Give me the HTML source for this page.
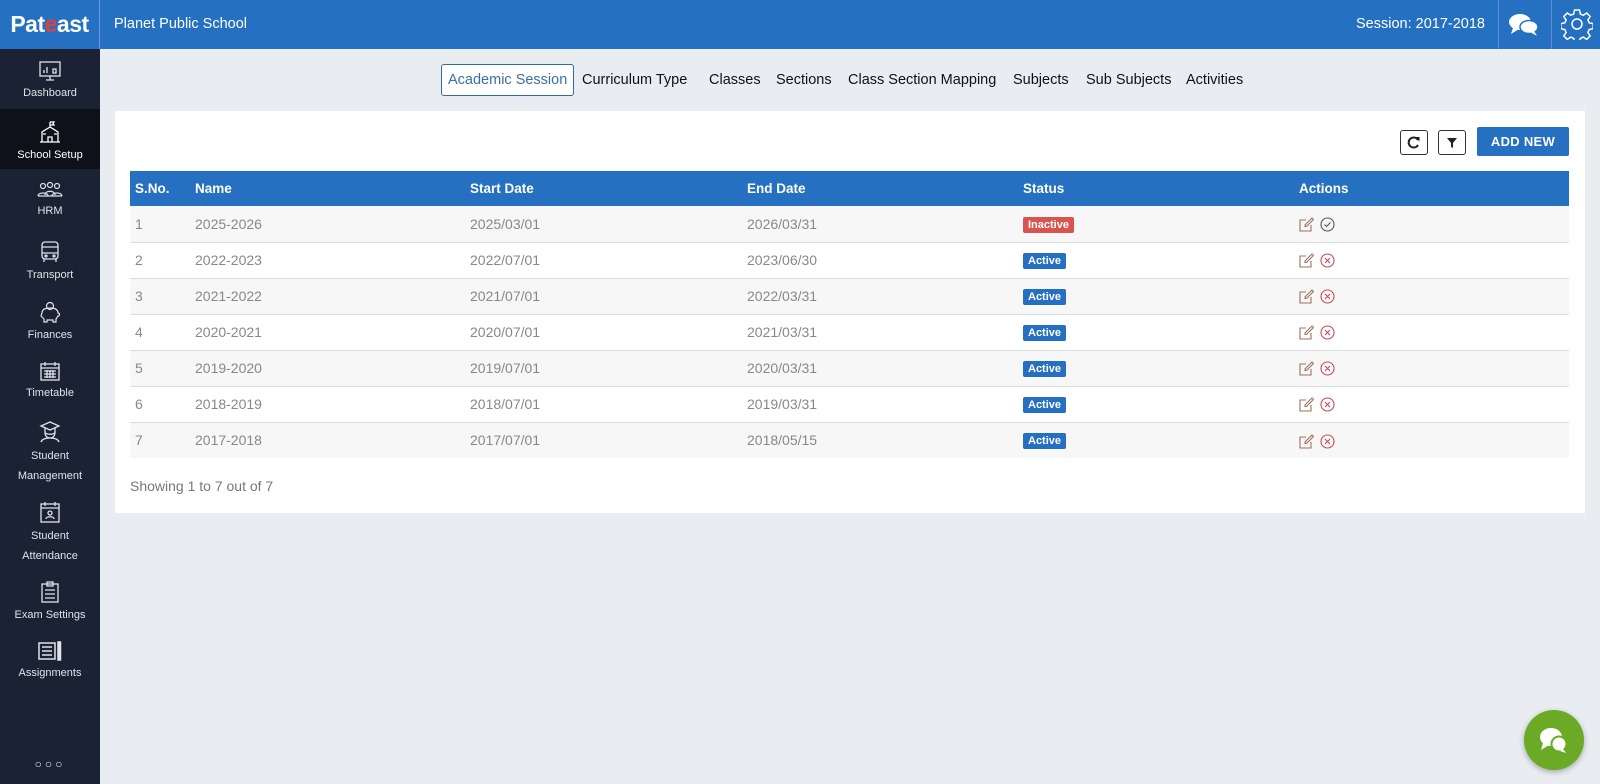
<!DOCTYPE html>
<html><head><meta charset="utf-8"><style>
*{margin:0;padding:0;box-sizing:border-box}
body{width:1600px;height:784px;overflow:hidden;background:#e9edf2;font-family:"Liberation Sans",sans-serif;position:relative}
.top{position:absolute;left:0;top:0;width:1600px;height:49px;background:#2670c2;color:#fff}
.logo{position:absolute;left:0;top:0;width:100px;height:49px;border-right:1px solid #6a9ad6;font-weight:bold;font-size:23px;line-height:49px;text-align:center;letter-spacing:-0.5px}
.logo span{color:#e0403a}
.school{position:absolute;left:114px;top:16px;font-size:14.5px}
.sess{position:absolute;right:115px;top:16px;font-size:14.5px}
.div{position:absolute;top:0;width:1px;height:49px;background:#5b8fd0}
.side{position:absolute;left:0;top:49px;width:100px;height:735px;background:#1b2233;color:#dfe3ea;font-size:11px;text-align:center}
.it{height:60px;padding-top:12px}
.it svg{display:block;margin:0 auto 6px}
.it.act{background:#0e1119;color:#fff}
.it.two{height:80px}
.it.two div{line-height:20px;margin-top:-3px}
.tabs{position:absolute;top:64px;height:32px;font-size:14.5px;color:#111}
.tab{position:absolute;top:0;line-height:32px;white-space:nowrap}
.tab.a{border:1px solid #2c6aa8;border-radius:3px;background:#fff;color:#3b6fa4;padding:0 6px;line-height:30px}
.panel{position:absolute;left:115px;top:111px;width:1470px;height:402px;background:#fff}
.btn{position:absolute;top:19px;width:28px;height:25px;border:1px solid #333;border-radius:3px;background:#fff}
.add{position:absolute;left:1362px;top:16px;width:92px;height:29px;background:#2670c2;color:#fff;font-weight:bold;font-size:13px;line-height:29px;text-align:center;border-radius:2px;letter-spacing:.3px}
table{position:absolute;left:15px;top:60px;width:1439px;border-collapse:collapse;font-size:14px}
th{background:#2670c2;color:#fff;text-align:left;height:35px;font-size:13.5px;font-weight:bold}
td{height:36px;color:#888;border-bottom:1px solid #ddd}
tr:nth-child(even) td{background:#f7f7f7}
th:first-child,td:first-child{padding-left:5px}
.b{display:inline-block;color:#fff;font-size:11px;font-weight:bold;padding:2px 5px;border-radius:2px;background:#2670c2}
.b.r{background:#d9534f}
.ic{vertical-align:middle;margin-right:6px}
.show{position:absolute;left:15px;top:367px;font-size:14px;color:#777}
.fab{position:absolute;left:1524px;top:710px;width:60px;height:60px;border-radius:50%;background:#6aaa25;box-shadow:0 2px 6px rgba(0,0,0,.3)}
</style></head><body>
<div class="top">
<div class="logo">Pat<span>e</span>ast</div>
<div class="school">Planet Public School</div>
<div class="sess">Session: 2017-2018</div>
<div class="div" style="left:1498px"></div><div class="div" style="left:1551px"></div>
<svg style="position:absolute;left:1508px;top:11px" width="32" height="28" viewBox="0 0 32 28"><ellipse cx="12" cy="11" rx="11" ry="8" fill="#fff"/><path d="M5 17 L3 23 L11 18Z" fill="#fff"/><ellipse cx="21" cy="16" rx="9" ry="6.5" fill="#fff" stroke="#2670c2" stroke-width="1.5"/><path d="M26 20 L29 25 L22 21Z" fill="#fff"/></svg>
<svg style="position:absolute;left:1561px;top:8px" width="32" height="32" viewBox="0 0 32 32" fill="none" stroke="#fff" stroke-width="1.5"><path d="M13.5 2h5l.8 4 3 1.3 3.4-2.3 3.5 3.5-2.3 3.4 1.3 3 4 .8v5l-4 .8-1.3 3 2.3 3.4-3.5 3.5-3.4-2.3-3 1.3-.8 4h-5l-.8-4-3-1.3-3.4 2.3-3.5-3.5 2.3-3.4-1.3-3-4-.8v-5l4-.8 1.3-3-2.3-3.4 3.5-3.5 3.4 2.3 3-1.3z"/><circle cx="16" cy="16" r="5"/></svg>
</div>
<div class="side">
<div class="it"><svg width="22" height="20" viewBox="0 0 22 20" fill="none" stroke="#dfe3ea" stroke-width="1.3"><rect x="1" y="1" width="20" height="14"/><path d="M7 19h8M11 15v4M5 12V9M8 12V6M14 8h3v4h-3z"/></svg>Dashboard</div>
<div class="it act"><svg width="22" height="22" viewBox="0 0 22 22" fill="none" stroke="#fff" stroke-width="1.3"><path d="M11 1v5M11 1h4l-1 1.5 1 1.5h-4M3 21V11l8-5 8 5v10zM1 21h20M9 21v-5h4v5M4 13h3M15 13h3"/></svg>School Setup</div>
<div class="it"><svg width="26" height="18" viewBox="0 0 26 18" fill="none" stroke="#dfe3ea" stroke-width="1.2"><circle cx="6" cy="5" r="2.5"/><circle cx="13" cy="4" r="2.5"/><circle cx="20" cy="5" r="2.5"/><path d="M1 15c0-4 10-4 10 0M8 14c0-5 10-5 10 0M15 15c0-4 10-4 10 0M1 15h24"/></svg>HRM</div>
<div class="it"><svg width="20" height="22" viewBox="0 0 20 22" fill="none" stroke="#dfe3ea" stroke-width="1.3"><rect x="2" y="1" width="16" height="17" rx="3"/><path d="M2 6h16M2 12h16M4 18v3M16 18v3"/><circle cx="6" cy="15" r="1"/><circle cx="14" cy="15" r="1"/></svg>Transport</div>
<div class="it"><svg width="24" height="22" viewBox="0 0 24 22" fill="none" stroke="#dfe3ea" stroke-width="1.2"><circle cx="12" cy="5" r="3.5"/><path d="M4 12c0-4 4-5 8-5s8 1 8 5c2 0 2 3 0 3l-2 3v3h-3v-2h-6v2H6v-3l-3-3 1-3z"/></svg>Finances</div>
<div class="it"><svg width="20" height="20" viewBox="0 0 20 20" fill="none" stroke="#dfe3ea" stroke-width="1.3"><rect x="1" y="3" width="18" height="16"/><path d="M5 1v4M15 1v4M1 7h18M4 10h12M4 13h12M4 16h12M7 9v8M10 9v8M13 9v8"/></svg>Timetable</div>
<div class="it two"><svg width="22" height="22" viewBox="0 0 22 22" fill="none" stroke="#dfe3ea" stroke-width="1.3"><path d="M2 5l9-4 9 4-9 4zM6 7v4c0 3 10 3 10 0V7M6 11c0 4 2 6 5 6s5-2 5-6M2 21c1-3 4-4 9-4s8 1 9 4"/></svg><div>Student<br>Management</div></div>
<div class="it two"><svg width="20" height="22" viewBox="0 0 20 22" fill="none" stroke="#dfe3ea" stroke-width="1.3"><rect x="1" y="3" width="18" height="18"/><path d="M5 1v4M15 1v4M1 7h18"/><circle cx="10" cy="12" r="2"/><path d="M6 18c0-3 8-3 8 0"/></svg><div>Student<br>Attendance</div></div>
<div class="it"><svg width="18" height="22" viewBox="0 0 18 22" fill="none" stroke="#dfe3ea" stroke-width="1.3"><rect x="1" y="3" width="16" height="18"/><path d="M6 1h6v4H6zM4 9h10M4 13h10M4 17h10"/></svg>Exam Settings</div>
<div class="it"><svg width="24" height="20" viewBox="0 0 24 20" fill="none" stroke="#dfe3ea" stroke-width="1.5"><rect x="1" y="2" width="16" height="16"/><path d="M4 6h10M4 10h10M4 14h10"/><rect x="20" y="1" width="2.5" height="18" fill="#dfe3ea"/></svg>Assignments</div>
<div style="position:absolute;top:708px;width:100px;font-size:12px;letter-spacing:3px">○○○</div>
</div>
<div class="tabs" style="left:0">
<div class="tab a" style="left:441px">Academic Session</div>
<div class="tab" style="left:582px">Curriculum Type</div>
<div class="tab" style="left:709px">Classes</div>
<div class="tab" style="left:776px">Sections</div>
<div class="tab" style="left:848px">Class Section Mapping</div>
<div class="tab" style="left:1013px">Subjects</div>
<div class="tab" style="left:1086px">Sub Subjects</div>
<div class="tab" style="left:1186px">Activities</div>
</div>
<div class="panel">
<div class="btn" style="left:1285px"><svg width="26" height="23" viewBox="0 0 26 23"><path d="M17 9a5 5 0 1 0 0 5" fill="none" stroke="#222" stroke-width="2"/><path d="M14 6l4.5 0 0 4.5z" fill="#222"/></svg></div>
<div class="btn" style="left:1323px"><svg width="26" height="23" viewBox="0 0 26 23"><path d="M8 7h10l-4 5v5l-2-1v-4z" fill="#222"/></svg></div>
<div class="add">ADD NEW</div>
<table>
<tr><th style="width:65px">S.No.</th><th style="width:275px">Name</th><th style="width:277px">Start Date</th><th style="width:276px">End Date</th><th style="width:276px">Status</th><th>Actions</th></tr>
<tr><td>1</td><td>2025-2026</td><td>2025/03/01</td><td>2026/03/31</td><td><span class="b r">Inactive</span></td><td><svg class="ic" width="15" height="15" viewBox="0 0 15 15" fill="none" stroke="#a07060" stroke-width="1.1"><path d="M12 8v6H1V3h6M13 1l1.5 1.5-7 7H6V8z"/></svg><svg class="ic" width="15" height="15" viewBox="0 0 15 15" fill="none" stroke="#555" stroke-width="1.1"><circle cx="7.5" cy="7.5" r="6.5"/><path d="M4.5 7.5l2 2 4-4"/></svg></td></tr>
<tr><td>2</td><td>2022-2023</td><td>2022/07/01</td><td>2023/06/30</td><td><span class="b">Active</span></td><td><svg class="ic" width="15" height="15" viewBox="0 0 15 15" fill="none" stroke="#a07060" stroke-width="1.1"><path d="M12 8v6H1V3h6M13 1l1.5 1.5-7 7H6V8z"/></svg><svg class="ic" width="15" height="15" viewBox="0 0 15 15" fill="none" stroke="#c0505a" stroke-width="1.1"><circle cx="7.5" cy="7.5" r="6.5"/><path d="M5 5l5 5M10 5l-5 5"/></svg></td></tr>
<tr><td>3</td><td>2021-2022</td><td>2021/07/01</td><td>2022/03/31</td><td><span class="b">Active</span></td><td><svg class="ic" width="15" height="15" viewBox="0 0 15 15" fill="none" stroke="#a07060" stroke-width="1.1"><path d="M12 8v6H1V3h6M13 1l1.5 1.5-7 7H6V8z"/></svg><svg class="ic" width="15" height="15" viewBox="0 0 15 15" fill="none" stroke="#c0505a" stroke-width="1.1"><circle cx="7.5" cy="7.5" r="6.5"/><path d="M5 5l5 5M10 5l-5 5"/></svg></td></tr>
<tr><td>4</td><td>2020-2021</td><td>2020/07/01</td><td>2021/03/31</td><td><span class="b">Active</span></td><td><svg class="ic" width="15" height="15" viewBox="0 0 15 15" fill="none" stroke="#a07060" stroke-width="1.1"><path d="M12 8v6H1V3h6M13 1l1.5 1.5-7 7H6V8z"/></svg><svg class="ic" width="15" height="15" viewBox="0 0 15 15" fill="none" stroke="#c0505a" stroke-width="1.1"><circle cx="7.5" cy="7.5" r="6.5"/><path d="M5 5l5 5M10 5l-5 5"/></svg></td></tr>
<tr><td>5</td><td>2019-2020</td><td>2019/07/01</td><td>2020/03/31</td><td><span class="b">Active</span></td><td><svg class="ic" width="15" height="15" viewBox="0 0 15 15" fill="none" stroke="#a07060" stroke-width="1.1"><path d="M12 8v6H1V3h6M13 1l1.5 1.5-7 7H6V8z"/></svg><svg class="ic" width="15" height="15" viewBox="0 0 15 15" fill="none" stroke="#c0505a" stroke-width="1.1"><circle cx="7.5" cy="7.5" r="6.5"/><path d="M5 5l5 5M10 5l-5 5"/></svg></td></tr>
<tr><td>6</td><td>2018-2019</td><td>2018/07/01</td><td>2019/03/31</td><td><span class="b">Active</span></td><td><svg class="ic" width="15" height="15" viewBox="0 0 15 15" fill="none" stroke="#a07060" stroke-width="1.1"><path d="M12 8v6H1V3h6M13 1l1.5 1.5-7 7H6V8z"/></svg><svg class="ic" width="15" height="15" viewBox="0 0 15 15" fill="none" stroke="#c0505a" stroke-width="1.1"><circle cx="7.5" cy="7.5" r="6.5"/><path d="M5 5l5 5M10 5l-5 5"/></svg></td></tr>
<tr><td style="border:0">7</td><td style="border:0">2017-2018</td><td style="border:0">2017/07/01</td><td style="border:0">2018/05/15</td><td style="border:0"><span class="b">Active</span></td><td style="border:0"><svg class="ic" width="15" height="15" viewBox="0 0 15 15" fill="none" stroke="#a07060" stroke-width="1.1"><path d="M12 8v6H1V3h6M13 1l1.5 1.5-7 7H6V8z"/></svg><svg class="ic" width="15" height="15" viewBox="0 0 15 15" fill="none" stroke="#c0505a" stroke-width="1.1"><circle cx="7.5" cy="7.5" r="6.5"/><path d="M5 5l5 5M10 5l-5 5"/></svg></td></tr>
</table>
<div class="show">Showing 1 to 7 out of 7</div>
</div>
<div class="fab"><svg width="60" height="60" viewBox="0 0 60 60"><ellipse cx="27" cy="27" rx="11" ry="9" fill="#fff"/><path d="M19 33l-2 7 8-5z" fill="#fff"/><circle cx="35" cy="34" r="7.5" fill="#fff" stroke="#6aaa25" stroke-width="2"/><path d="M39 39l3 4-6-2z" fill="#fff"/></svg></div>
</body></html>
